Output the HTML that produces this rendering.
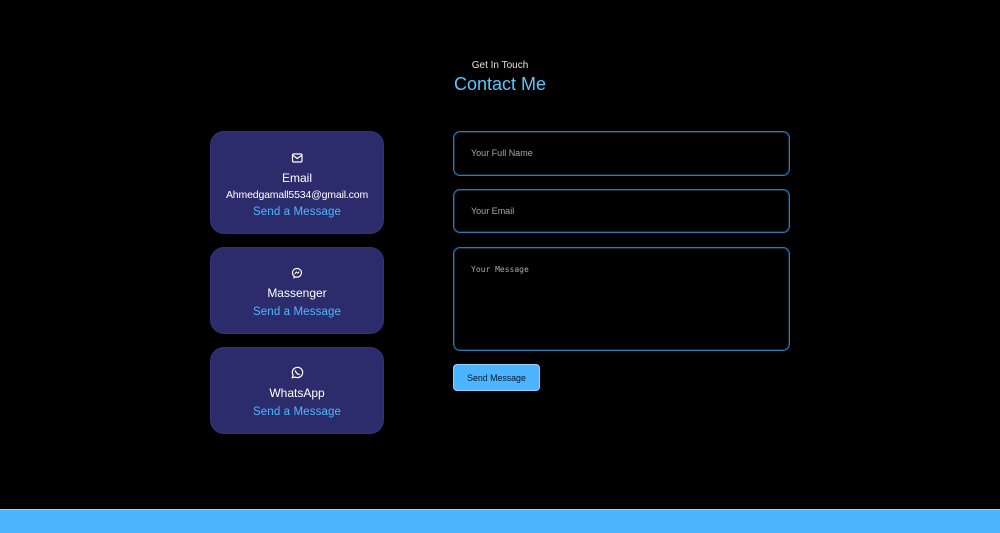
<!DOCTYPE html>
<html><head><meta charset="utf-8"><style>
html,body{margin:0;padding:0;background:#000;width:1000px;height:533px;overflow:hidden}
body{position:relative;font-family:"Liberation Sans",sans-serif}
.a{position:absolute;white-space:nowrap;line-height:1}
.c{text-align:center}
.card{position:absolute;left:210px;width:172px;background:#2c2c6c;border:1px solid #33337a;border-radius:14px}
.inp{position:absolute;left:453px;width:335px;border:1px solid #2e7ab5;box-shadow:inset 0 0 0 1px rgba(39,104,158,.4);border-radius:7px;box-sizing:content-box}
.ph{color:#aaa;font-size:9px}
.link{left:210px;width:174px;color:#4db8ff;font-size:11.5px;letter-spacing:.12px}
.t{left:210px;width:174px;color:#fff;font-size:12px}
svg{position:absolute;fill:none;stroke:#fff}
</style></head><body>
<div class="a c" style="left:400px;width:200px;top:61px;color:#e4dfd6;font-size:10px">Get In Touch</div>
<div class="a c" style="left:400px;width:200px;top:75px;color:#55c8ff;font-size:18px">Contact Me</div>

<div class="card" style="top:131px;height:101px"></div>
<div class="card" style="top:247px;height:85px"></div>
<div class="card" style="top:347px;height:85px"></div>

<svg style="left:291px;top:152px" width="12" height="12" viewBox="0 0 12 12" stroke-width="1.2"><rect x="1.5" y="2" width="9.5" height="8" rx="1.2"/><path d="M2 3.5L6.2 6.5L10.5 3.5"/></svg>
<svg style="left:291px;top:267px" width="12" height="12" viewBox="0 0 12 12" stroke-width="1.2"><path d="M6 1.5C3.3 1.5 1.5 3.4 1.5 5.8C1.5 7.2 2.1 8.3 3.1 9.1V10.7L4.6 9.9C5.1 10 5.5 10.1 6 10.1C8.7 10.1 10.5 8.2 10.5 5.8C10.5 3.4 8.7 1.5 6 1.5Z"/><path d="M3.7 7L5.3 5L6.7 6.2L8.3 4.6" stroke-width="1"/></svg>
<svg style="left:291px;top:366px" width="13" height="13" viewBox="0 0 13 13" stroke-width="1.2"><path d="M1.3 11.7L2.1 8.9C1.6 8.1 1.3 7.3 1.3 6.4C1.3 3.6 3.6 1.3 6.5 1.3C9.4 1.3 11.7 3.6 11.7 6.4C11.7 9.3 9.4 11.6 6.5 11.6C5.6 11.6 4.8 11.4 4.1 11Z"/><path d="M4.6 4.2C4 5.6 6.6 8.9 8.7 8.4" stroke-width="1.3"/></svg>

<div class="a c t" style="top:172px">Email</div>
<div class="a c" style="left:210px;width:174px;top:190px;color:#fff;font-size:10.5px;letter-spacing:-.16px">Ahmedgamall5534@gmail.com</div>
<div class="a c link" style="top:207px">Send a Message</div>

<div class="a c t" style="top:287px">Massenger</div>
<div class="a c link" style="top:307px">Send a Message</div>

<div class="a c t" style="top:387px">WhatsApp</div>
<div class="a c link" style="top:407px">Send a Message</div>

<div class="inp" style="top:131px;height:43px"></div>
<div class="inp" style="top:189px;height:42px"></div>
<div class="inp" style="top:247px;height:102px"></div>
<div class="a ph" style="left:471px;top:149px">Your Full Name</div>
<div class="a ph" style="left:471px;top:207px">Your Email</div>
<div class="a ph" style="left:471px;top:266px;font-family:'DejaVu Sans Mono',monospace;font-size:8px">Your Message</div>

<div class="a" style="left:453px;top:364px;width:85px;height:25px;background:#4db5ff;border:1px solid #8fd2ff;border-radius:4px;color:#04162b;font-size:8.8px;text-align:center;line-height:26px">Send Message</div>

<div class="a" style="left:0;top:509px;width:1000px;height:24px;background:#4db5ff"></div>
<div class="a" style="left:0;top:509px;width:1000px;height:1px;background:#8fd8ff"></div>
</body></html>
